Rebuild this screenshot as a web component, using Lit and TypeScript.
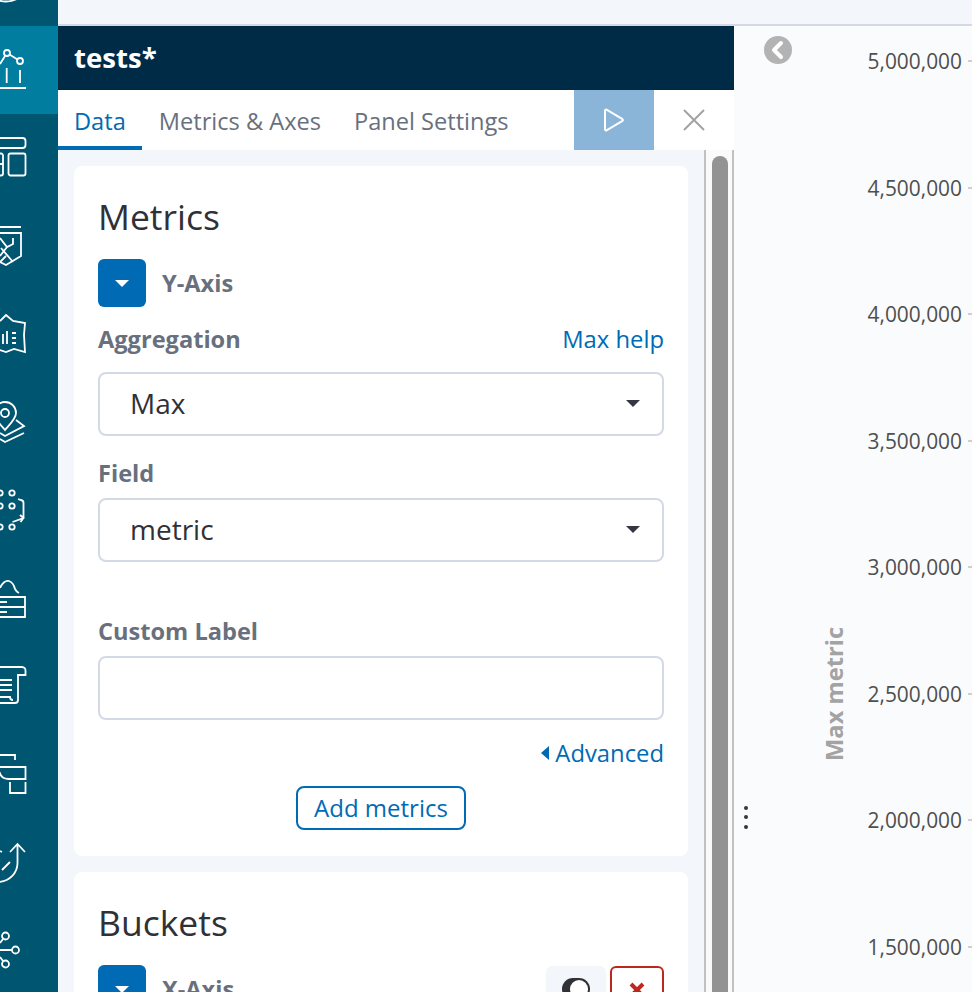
import { LitElement, css, html, svg } from 'lit'
import { customElement } from 'lit/decorators.js'

// icon strokes are in item coordinates (58x88), the left part gets cut by the rail
const navIcons = [
  svg`<circle cx="6" cy="39.500" r="24"/>`,
  svg`<circle cx="7" cy="27" r="3"/><circle cx="20" cy="35" r="3"/><path d="M0 38l5-8M9.500 28.500l8 5M6.700 42v15M20 44v13M0 62h26"/>`,
  svg`<path d="M0 24h22.500a3 3 0 0 1 3 3v4a3 3 0 0 1-3 3H0M10.500 39.500h13a2 2 0 0 1 2 2v18a2 2 0 0 1-2 2h-13a2 2 0 0 1-2-2v-18a2 2 0 0 1 2-2zM0 39.500h1a2 2 0 0 1 2 2v18a2 2 0 0 1-2 2H0M0 50h3"/>`,
  svg`<path d="M0 25h21M0 31h21v23l-15 9-6-3M0 36l7 9 6-3v-6M7 45l-7 9M1 46l12 14M0 60l6-6"/>`,
  svg`<path d="M0 31l6-6 7 6 12 2-1 12 1 17-11-3-8 3-6-2M3 44v10M7 41v13M12 43h4M12 48h4M12 53h4"/>`,
  svg`<path d="M5 52c-4-5-11-11-11-17a11 11 0 0 1 22 0c0 6-7 12-11 17z"/><circle cx="5" cy="35" r="4"/><path d="M16 42l8 6-19 10-5-3M24 55l-19 9-5-3"/>`,
  svg`<circle cx="0" cy="27" r="2.700"/><circle cx="12" cy="27" r="2.700"/><circle cx="0" cy="40" r="2.700"/><circle cx="12" cy="40" r="2.700"/><circle cx="0" cy="61" r="2.700"/><circle cx="12" cy="61" r="2.700"/><path d="M18 33l3 1a3 3 0 0 1 2.500 3v15l-11 4M20 49l3.500 3-3 4"/>`,
  svg`<path d="M0 34c2-5 6-8 9-7s5 4 6 8c1 2 2 3 4 4M0 43h25v20H0M0 53h25M0 48h7M0 58h7"/>`,
  svg`<path d="M0 25h22a3.500 3.500 0 0 1 3.500 4v4H18v25a3 3 0 0 1-3 3H0M0 38h12M0 43h12M0 48h12M0 55h10a3 3 0 0 0 3 3"/>`,
  svg`<path d="M0 25h15v5M0 37h25.500v12h-17c-4 0-8-2-9-7M10 52v11h15.500V52"/>`,
  svg`<path d="M17.500 26v19c0 10-8 18-18 19M10 34l7.500-8 7.500 8M2 52l8-8M0 33l2 1"/>`,
  svg`<circle cx="5.500" cy="30" r="3.500"/><circle cx="15.500" cy="44" r="3.500"/><circle cx="5.500" cy="58" r="3.500"/><path d="M0 44h12M0 37l3-4M0 51l3 4"/>`,
]

const ticks = ['5,000,000', '4,500,000', '4,000,000', '3,500,000', '3,000,000', '2,500,000', '2,000,000', '1,500,000']

@customElement('app-root')
export class AppRoot extends LitElement {
  static styles = css`
    :host {
      display: block;
      width: 972px;
      height: 992px;
      overflow: hidden;
      font-family: 'Open Sans', 'Noto Sans', sans-serif;
      color: #343741;
      background: #f3f6fa;
    }
    .page {
      display: grid;
      grid-template-columns: 58px 1fr;
      height: 992px;
    }
    .rail {
      background: #005571;
      overflow: hidden;
      margin: 0;
    }
    .rail-list {
      margin-top: -62px;
    }
    .rail-item {
      display: block;
      height: 88px;
    }
    .rail-item.active {
      background: #017d9f;
    }
    .rail-item svg {
      display: block;
      fill: none;
      stroke: #fff;
      stroke-width: 1.800;
    }
    .main {
      display: flex;
      flex-direction: column;
      min-width: 0;
    }
    .topbar {
      height: 24px;
      flex: none;
      background: #f3f6fa;
      border-bottom: 2px solid #d3dae6;
    }
    .work {
      flex: 1;
      display: flex;
      min-height: 0;
    }
    .editor {
      width: 676px;
      flex: none;
      display: flex;
      flex-direction: column;
    }
    .title {
      height: 64px;
      flex: none;
      background: #002b47;
      color: #fff;
      font-size: 27.600px;
      font-weight: 700;
      line-height: 62px;
      padding-left: 16px;
    }
    .tabs {
      height: 60px;
      flex: none;
      display: flex;
      background: #fff;
    }
    .tab {
      font-size: 23.600px;
      line-height: 62px;
      padding: 0 16px;
      color: #69707d;
      margin-right: 1px;
    }
    .tab.on {
      color: #006bb4;
      box-shadow: inset 0 -4px 0 #006bb4;
    }
    .tab-spacer {
      flex: 1;
    }
    .run {
      width: 80px;
      background: #8ab5d9;
      display: flex;
      align-items: center;
      justify-content: center;
    }
    .close {
      width: 80px;
      display: flex;
      align-items: center;
      justify-content: center;
    }
    .body {
      flex: 1;
      display: flex;
      min-height: 0;
      overflow: hidden;
    }
    .scroll-area {
      width: 646px;
      flex: none;
      padding: 16px 16px 0;
      box-sizing: border-box;
      display: flex;
      flex-direction: column;
      gap: 16px;
    }
    .track {
      width: 30px;
      box-sizing: border-box;
      flex: none;
      background: #fafafa;
      border-left: 2px solid #c1c1c1;
      border-right: 2px solid #c1c1c1;
      padding: 6px 4px 0 6px;
    }
    .thumb {
      height: 100%;
      background: #939393;
      border-radius: 8px 8px 0 0;
    }
    .card {
      flex: none;
      background: #fff;
      border-radius: 8px;
      padding: 23px 24px 24px;
      box-sizing: border-box;
    }
    .card.metrics {
      height: 690px;
    }
    h2 {
      margin: 0;
      font-size: 35.500px;
      font-weight: 400;
      line-height: 54px;
      color: #2f3136;
    }
    .agg-head {
      display: flex;
      align-items: center;
      gap: 16px;
      margin-top: 16px;
      height: 48px;
    }
    .toggle {
      width: 48px;
      height: 48px;
      border-radius: 6px;
      background: #006bb4;
      display: flex;
      align-items: center;
      justify-content: center;
    }
    .toggle i {
      border: 7px solid transparent;
      border-top: 7px solid #fff;
      border-bottom: 0;
      border-left-width: 7.500px;
      border-right-width: 7.500px;
    }
    .agg-name {
      font-size: 23.600px;
      font-weight: 700;
      color: #69707d;
    }
    .label-row {
      display: flex;
      justify-content: space-between;
      align-items: baseline;
      margin-top: 16px;
      margin-bottom: 17px;
    }
    label {
      display: block;
      font-size: 23.600px;
      font-weight: 700;
      line-height: 32px;
      color: #69707d;
    }
    label.field {
      margin-top: 21px;
    }
    label.custom {
      margin-top: 53px;
    }
    .link {
      font-size: 23.800px;
      line-height: 32px;
      color: #006bb4;
    }
    .input {
      height: 64px;
      box-sizing: border-box;
      margin-top: 9px;
      border: 2px solid #d3dae6;
      border-radius: 8px;
      display: flex;
      align-items: center;
      justify-content: space-between;
      padding: 0 22px 2px 30px;
      font-size: 28px;
      color: #2f3136;
    }
    .label-row + .input {
      margin-top: 0;
    }
    .input i {
      border: 7.500px solid transparent;
      border-top: 7.500px solid #343741;
      border-bottom: 0;
    }
    .advanced {
      display: flex;
      justify-content: flex-end;
      align-items: center;
      gap: 6px;
      margin-top: 17px;
      height: 32px;
    }
    .advanced i {
      border: 7px solid transparent;
      border-right: 8px solid #006bb4;
      border-left: 0;
    }
    .add {
      display: block;
      width: 170px;
      height: 44px;
      box-sizing: border-box;
      margin: 17px auto 0;
      border: 2px solid #006bb4;
      border-radius: 8px;
      background: #fff;
      font: inherit;
      font-size: 24px;
      line-height: 38px;
      padding: 0;
      color: #006bb4;
    }
    .bucket-actions {
      margin-left: auto;
      margin-top: 2px;
      display: flex;
      gap: 4px;
    }
    .eye {
      width: 60px;
      height: 48px;
      border-radius: 6px;
      background: #f3f6fa;
      display: flex;
      justify-content: center;
      padding-top: 12px;
      box-sizing: border-box;
    }
    .switch {
      width: 28px;
      height: 22px;
      border-radius: 11px;
      background: #2f3136;
      position: relative;
    }
    .switch::after {
      content: '';
      position: absolute;
      right: 2px;
      top: 2px;
      width: 18px;
      height: 18px;
      border-radius: 50%;
      background: #fff;
    }
    .del {
      width: 54px;
      height: 48px;
      box-sizing: border-box;
      border: 2px solid #bd271e;
      border-radius: 6px;
      display: flex;
      justify-content: center;
      padding-top: 14px;
    }
    .side {
      flex: 1;
      position: relative;
      min-width: 0;
      background: #fafbfd;
    }
    .collapse {
      position: absolute;
      left: 30px;
      top: 10px;
    }
    .grip {
      position: absolute;
      left: 10px;
      top: 780px;
      display: flex;
      flex-direction: column;
      gap: 5.300px;
    }
    .grip b {
      width: 4px;
      height: 4px;
      border-radius: 50%;
      background: #343741;
    }
    .axis-title {
      position: absolute;
      left: 87px;
      top: 598px;
      height: 140px;
      writing-mode: vertical-rl;
      transform: rotate(180deg);
      text-align: center;
      font-size: 23.700px;
      font-weight: 700;
      line-height: 26px;
      color: #a3a3a3;
    }
    .axis {
      position: absolute;
      right: 0;
      top: 22px;
      display: flex;
      flex-direction: column;
    }
    .tick {
      height: 126.570px;
      display: flex;
      gap: 6px;
      font-size: 20.900px;
      line-height: 26px;
      color: #4f4f4f;
    }
    .tick::after {
      content: '';
      width: 4px;
      height: 2px;
      margin-top: 12px;
      background: #cfcfcf;
    }
  `

  render() {
    return html`
      <div class="page">
        <nav class="rail">
          <div class="rail-list">
            ${navIcons.map(
              (icon, i) => html`
                <a class="rail-item ${i === 1 ? 'active' : ''}">
                  <svg width="58" height="88" viewBox="0 0 58 88">${icon}</svg>
                </a>
              `
            )}
          </div>
        </nav>
        <div class="main">
          <div class="topbar"></div>
          <div class="work">
            <section class="editor">
              <div class="title">tests*</div>
              <div class="tabs">
                <div class="tab on">Data</div>
                <div class="tab">Metrics &amp; Axes</div>
                <div class="tab">Panel Settings</div>
                <div class="tab-spacer"></div>
                <div class="run">
                  <svg width="24" height="26" viewBox="0 0 24 26">
                    <path d="M3 3.500v19a1 1 0 0 0 1.500.8l16-9.500a1 1 0 0 0 0-1.600l-16-9.500A1 1 0 0 0 3 3.500z" fill="none" stroke="#fff" stroke-width="2" />
                  </svg>
                </div>
                <div class="close">
                  <svg width="22" height="22" viewBox="0 0 22 22">
                    <path d="M1 1l20 20M21 1L1 21" stroke="#a2a2a2" stroke-width="2" fill="none" />
                  </svg>
                </div>
              </div>
              <div class="body">
                <div class="scroll-area">
                  <div class="card metrics">
                    <h2>Metrics</h2>
                    <div class="agg-head">
                      <div class="toggle"><i></i></div>
                      <span class="agg-name">Y-Axis</span>
                    </div>
                    <div class="label-row">
                      <label>Aggregation</label><span class="link">Max help</span>
                    </div>
                    <div class="input">Max<i></i></div>
                    <label class="field">Field</label>
                    <div class="input">metric<i></i></div>
                    <label class="custom">Custom Label</label>
                    <div class="input"></div>
                    <div class="advanced"><i></i><span class="link">Advanced</span></div>
                    <button class="add">Add metrics</button>
                  </div>
                  <div class="card">
                    <h2>Buckets</h2>
                    <div class="agg-head">
                      <div class="toggle"><i></i></div>
                      <span class="agg-name">X-Axis</span>
                      <div class="bucket-actions">
                        <div class="eye"><div class="switch"></div></div>
                        <div class="del">
                          <svg width="16" height="16" viewBox="0 0 16 16">
                            <path d="M2 2l12 12M14 2L2 14" stroke="#bd271e" stroke-width="4" fill="none" />
                          </svg>
                        </div>
                      </div>
                    </div>
                  </div>
                </div>
                <div class="track"><div class="thumb"></div></div>
              </div>
            </section>
            <aside class="side">
              <div class="collapse">
                <svg width="28" height="28" viewBox="0 0 28 28">
                  <circle cx="14" cy="14" r="14" fill="#b3b3b3" />
                  <path d="M17 7l-7 7 7 7" fill="none" stroke="#fff" stroke-width="4" stroke-linecap="round" stroke-linejoin="round" />
                </svg>
              </div>
              <div class="grip"><b></b><b></b><b></b></div>
              <div class="axis-title">Max metric</div>
              <div class="axis">
                ${ticks.map((t) => html`<div class="tick">${t}</div>`)}
              </div>
            </aside>
          </div>
        </div>
      </div>
    `
  }
}
